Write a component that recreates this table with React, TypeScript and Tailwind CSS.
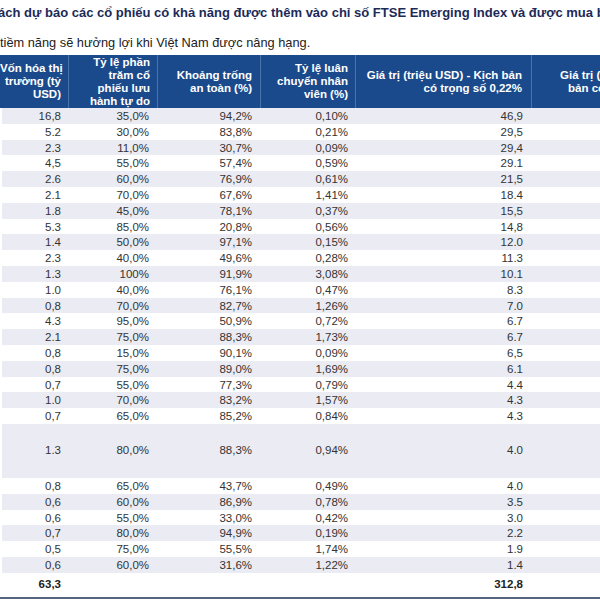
import React from "react";

const rows: [string, string, string, string, string][] = [
  ["16,8", "35,0%", "94,2%", "0,10%", "46,9"],
  ["5.2", "30,0%", "83,8%", "0,21%", "29,5"],
  ["2.3", "11,0%", "30,7%", "0,09%", "29,4"],
  ["4,5", "55,0%", "57,4%", "0,59%", "29.1"],
  ["2.6", "60,0%", "76,9%", "0,61%", "21,5"],
  ["2.1", "70,0%", "67,6%", "1,41%", "18.4"],
  ["1.8", "45,0%", "78,1%", "0,37%", "15,5"],
  ["5.3", "85,0%", "20,8%", "0,56%", "14,8"],
  ["1.4", "50,0%", "97,1%", "0,15%", "12.0"],
  ["2.3", "40,0%", "49,6%", "0,28%", "11.3"],
  ["1.3", "100%", "91,9%", "3,08%", "10.1"],
  ["1.0", "40,0%", "76,1%", "0,47%", "8.3"],
  ["0,8", "70,0%", "82,7%", "1,26%", "7.0"],
  ["4.3", "95,0%", "50,9%", "0,72%", "6.7"],
  ["2.1", "75,0%", "88,3%", "1,73%", "6.7"],
  ["0,8", "15,0%", "90,1%", "0,09%", "6,5"],
  ["0,8", "75,0%", "89,0%", "1,69%", "6.1"],
  ["0,7", "55,0%", "77,3%", "0,79%", "4.4"],
  ["1.0", "70,0%", "83,2%", "1,57%", "4.3"],
  ["0,7", "65,0%", "85,2%", "0,84%", "4.3"],
  ["1.3", "80,0%", "88,3%", "0,94%", "4.0"],
  ["0,8", "65,0%", "43,7%", "0,49%", "4.0"],
  ["0,6", "60,0%", "86,9%", "0,78%", "3.5"],
  ["0,6", "55,0%", "33,0%", "0,42%", "3.0"],
  ["0,7", "80,0%", "94,9%", "0,19%", "2.2"],
  ["0,5", "75,0%", "55,5%", "1,74%", "1.9"],
  ["0,6", "60,0%", "31,6%", "1,22%", "1.4"],
];

const grid = "grid grid-cols-[68px_89px_103px_95px_176px_220px]";

const HeadCell = ({ lines, className = "" }: { lines: string[]; className?: string }) => (
  <div className={`flex flex-col justify-center border-l border-[#4a73aa] text-right leading-[13px] first:border-l-0 ${className}`}>
    {lines.map((l) => (
      <span key={l} className="whitespace-nowrap">{l}</span>
    ))}
  </div>
);

export default function App() {
  return (
    <div
      className="h-[600px] w-[600px] overflow-hidden bg-white"
      style={{ fontFamily: '"Liberation Sans", Arial, sans-serif' }}
    >
      <div className="ml-[-2px] flex h-[25px] items-center whitespace-nowrap text-[13px] font-bold text-[#1c2a58]">
        ách dự báo các cổ phiếu có khả năng được thêm vào chỉ số FTSE Emerging Index và được mua bởi các quỹ ETF
      </div>
      <div className="flex h-[30px] items-end pb-[3px] whitespace-nowrap text-[12.8px] text-[#222]">
        tiềm năng sẽ hưởng lợi khi Việt Nam được nâng hạng.
      </div>

      <div className="w-[751px]">
        <div className={`${grid} h-[53px] bg-[#1b4a8c] text-[11.5px] font-bold text-white`}>
          <HeadCell lines={["Vốn hóa thị", "trường (tỷ", "USD)"]} className="pr-[7px]" />
          <HeadCell lines={["Tỷ lệ phần", "trăm cổ", "phiếu lưu", "hành tự do"]} className="pr-[7px]" />
          <HeadCell lines={["Khoảng trống", "an toàn (%)"]} className="pr-[8px]" />
          <HeadCell lines={["Tỷ lệ luân", "chuyển nhân", "viên (%)"]} className="pr-[7px]" />
          <HeadCell lines={["Giá trị (triệu USD) - Kịch bản", "có trọng số 0,22%"]} className="pr-[9px]" />
          <div className="flex flex-col justify-center border-l border-[#4a73aa] pl-[28px] leading-[13px]">
            <span className="whitespace-nowrap">Giá trị (triệu USD) - Kịch</span>
            <span className="whitespace-nowrap pl-[8px]">bản có trọng số 0,50%</span>
          </div>
        </div>

        {rows.map((r, i) => (
          <div
            key={i}
            className={`${grid} items-center text-right text-[11.5px] text-[#333] ${
              i === 20 ? "h-[54px]" : "h-[15.8px]"
            } ${i % 2 === 0 ? "bg-[#ebebf3]" : "bg-white"}`}
          >
            <div className="flex h-full items-center justify-end border-l-2 border-white pr-[7px]">{r[0]}</div>
            <div className="pr-[8px]">{r[1]}</div>
            <div className="pr-[8px]">{r[2]}</div>
            <div className="pr-[7px]">{r[3]}</div>
            <div className="pr-[8px]">{r[4]}</div>
            <div />
          </div>
        ))}

        <div className={`${grid} h-[26px] items-center border-b-2 border-[#55657e] text-right text-[11.5px] font-bold text-[#222]`}>
          <div className="pr-[7px]">63,3</div>
          <div />
          <div />
          <div />
          <div className="pr-[8px]">312,8</div>
          <div />
        </div>
      </div>
    </div>
  );
}
